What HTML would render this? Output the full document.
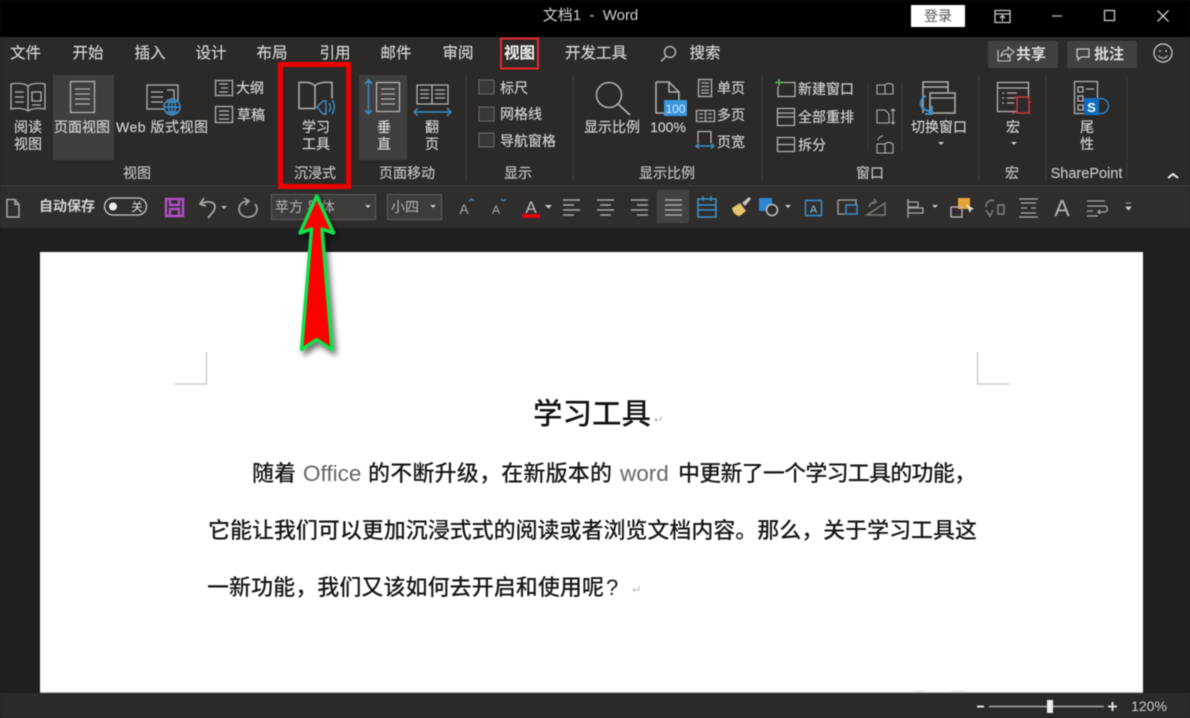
<!DOCTYPE html>
<html lang="zh"><head><meta charset="utf-8"><title>文档1 - Word</title>
<style>
html,body{margin:0;padding:0;background:#1f1f1f;width:1190px;height:718px;overflow:hidden}
svg{display:block;filter:blur(.45px)}
text{font-family:"Liberation Sans","Noto Sans CJK SC",sans-serif}
.tab{font-size:15.5px;fill:#d6d6d6;text-anchor:middle;stroke:#d6d6d6;stroke-width:.15}
.r{font-size:14px;fill:#d4d4d4;text-anchor:middle;stroke:#d4d4d4;stroke-width:.15}
.l{font-size:14px;fill:#d4d4d4;stroke:#d4d4d4;stroke-width:.15}
.g{font-size:14px;fill:#c4c4c4;text-anchor:middle;stroke:#c4c4c4;stroke-width:.15}
.d{font-size:22px;fill:#151515;font-weight:500}
.dl{font-size:22.5px;fill:#666}
.i{fill:none;stroke:#b4b0ac;stroke-width:1.3}
.b{fill:none;stroke:#3d8fc9;stroke-width:1.4}
.t{fill:none;stroke:#aaa6a2;stroke-width:1.5}
</style></head><body>
<svg width="1190" height="718" viewBox="0 0 1190 718" xmlns="http://www.w3.org/2000/svg">
<defs><filter id="sh" x="-40%" y="-10%" width="200%" height="125%"><feDropShadow dx="3" dy="4" stdDeviation="3" flood-color="#000" flood-opacity=".55"/></filter></defs>
<rect width="1190" height="718" fill="#1f1f1f"/>
<rect width="1190" height="37" fill="#000"/>
<rect y="37" width="1190" height="149" fill="#2b2a29"/>
<rect y="186" width="1190" height="42" fill="#2f2e2d"/>
<rect y="185" width="1190" height="1" fill="#3a3a3a"/>

<!-- title bar -->
<text x="590.500" y="20" font-size="15" fill="#d0d0d0" text-anchor="middle">文档1 &#160;-&#160; Word</text>
<rect x="911" y="5" width="54" height="22" fill="#fff"/>
<text x="938" y="21" font-size="14" fill="#555" text-anchor="middle">登录</text>
<path d="M995 10.500h15v12h-15zM995 14h15M1002.500 21v-5M1000 18l2.500-2.500 2.500 2.500" fill="none" stroke="#c8c8c8" stroke-width="1.300"/>
<path d="M1052 16h10" stroke="#b5b5b5" stroke-width="1.300"/>
<rect x="1104.500" y="10.500" width="10" height="10" fill="none" stroke="#c8c8c8" stroke-width="1.300"/>
<path d="M1157.500 10.500l11 11M1168.500 10.500l-11 11" stroke="#c8c8c8" stroke-width="1.300"/>

<!-- tabs -->
<text class="tab" x="25.500" y="58">文件</text><text class="tab" x="88" y="58">开始</text><text class="tab" x="150" y="58">插入</text><text class="tab" x="211" y="58">设计</text><text class="tab" x="272" y="58">布局</text><text class="tab" x="335" y="58">引用</text><text class="tab" x="396" y="58">邮件</text><text class="tab" x="458" y="58">审阅</text>
<text class="tab" x="519.500" y="58" style="fill:#eee;font-weight:700">视图</text>
<rect x="501" y="38.500" width="37" height="30" fill="none" stroke="#e8272e" stroke-width="2"/>
<text class="tab" x="596" y="58">开发工具</text>
<circle cx="670" cy="52" r="5.500" class="i" style="stroke-width:1.500"/><path d="M666 56.500l-5 5" class="i" style="stroke-width:1.500"/>
<text class="tab" x="705" y="58">搜索</text>

<rect x="988" y="41" width="70" height="27" rx="2" fill="#414140"/>
<path d="M998 50v11h12v-5M1001 56c1-5 4-6 7-6v-3l6 5-6 5v-3c-3 0-5 0-7 2z" fill="none" stroke="#ccc" stroke-width="1.100"/>
<text x="1031" y="59" font-size="15" fill="#ddd" font-weight="700" text-anchor="middle">共享</text>
<rect x="1067" y="41" width="70" height="27" rx="2" fill="#414140"/>
<path d="M1077 49h12v8h-8l-3 3v-3h-1z" fill="none" stroke="#ccc" stroke-width="1.200"/>
<text x="1109" y="59" font-size="15" fill="#ddd" font-weight="700" text-anchor="middle">批注</text>
<circle cx="1163" cy="53" r="9" fill="none" stroke="#bbb" stroke-width="1.400"/><circle cx="1160" cy="51" r="1" fill="#bbb"/><circle cx="1166" cy="51" r="1" fill="#bbb"/><path d="M1158.500 55.500c2 3.500 7 3.500 9 0" fill="none" stroke="#bbb" stroke-width="1.200"/>

<!-- group 视图 -->
<rect x="53" y="75" width="61" height="85" fill="#403f3e"/>
<path class="i" d="M28 86c-4-3-12-3-17-2v25c5-1 13-1 17 2c4-3 12-3 17-2v-25c-5-1-13-1-17 2zM28 86v25M15 92h9M15 97h9M15 102h9M32 92h9v9h-9zM32 105h9"/>
<rect class="i" x="70.500" y="81.500" width="24" height="31"/><path class="i" d="M75 89h15M75 94h15M75 99h15M75 104h15"/>
<text class="r" x="28" y="132">阅读</text><text class="r" x="28" y="149">视图</text>
<text class="r" x="82" y="132">页面视图</text>
<rect class="i" x="147" y="85" width="31" height="24"/><path class="i" d="M151 92h12M151 97h12M151 102h12M167 90h7v14"/>
<circle cx="172" cy="107" r="8" fill="#2b2a29" stroke="#3d8fc9" stroke-width="1.500"/><path class="b" d="M164 107h16M172 99v16M167 102h10M167 112h10"/><ellipse cx="172" cy="107" rx="3.500" ry="8" class="b"/>
<text class="l" x="116" y="132" textLength="92">Web 版式视图</text>
<rect class="i" x="215.500" y="80.500" width="17" height="15"/><path class="i" d="M219 84h9M221 88h7M219 92h9"/>
<text class="l" x="236" y="93">大纲</text>
<rect class="i" x="215.500" y="106.500" width="17" height="16"/><path class="i" d="M219 111h10M219 115h10M219 119h10"/>
<text class="l" x="237" y="120">草稿</text>
<text class="g" x="137" y="178">视图</text>
<path d="M279.500 75v105M466 75v105M573 76v104M762 76v104M979 76v104M1046 76v104M1127 76v104" stroke="#3c3b3a"/>

<!-- 学习工具 -->
<path class="i" d="M315 86c-3-4-11-4-16-3.500v26h16M315 86c3-4 11-4 17-3.500v16M315 86v23" style="stroke-width:1.500"/>
<path class="b" d="M317 107l6-6h3v13h-3zM329 103c2 3 2 6 0 9M332 100c3 4 3 10 0 14" />
<text class="r" x="316" y="132">学习</text><text class="r" x="316" y="149">工具</text>
<text class="g" x="315" y="178">沉浸式</text>
<rect x="280.500" y="64.500" width="68" height="122" fill="none" stroke="#ee0000" stroke-width="5"/>

<!-- 页面移动 -->
<rect x="359" y="75" width="48" height="85" fill="#403f3e"/>
<path class="b" d="M368.500 80v34M365 84l3.500-4 3.500 4M365 110l3.500 4 3.500-4"/>
<rect class="i" x="376.500" y="82.500" width="23" height="29"/><path class="i" d="M381 89h14M381 94h14M381 99h14M381 104h14"/>
<text class="r" x="384" y="132">垂</text><text class="r" x="384" y="149" >直</text>
<path class="i" d="M417 85h15v19h-15zM432 85h16v19h-16zM420 90h9M420 94h9M420 98h9M435 90h10M435 94h10M435 98h10"/>
<path class="b" d="M414 112h37M418 108l-4 4 4 4M447 108l4 4-4 4"/>
<text class="r" x="432" y="132">翻</text><text class="r" x="432" y="149">页</text>
<text class="g" x="407" y="178">页面移动</text>

<!-- 显示 -->
<rect x="479" y="80" width="15" height="14" fill="#383837" stroke="#6d6c6b"/>
<text class="l" x="500" y="93">标尺</text>
<rect x="479" y="107" width="15" height="14" fill="#383837" stroke="#6d6c6b"/>
<text class="l" x="500" y="119">网格线</text>
<rect x="479" y="133" width="15" height="14" fill="#383837" stroke="#6d6c6b"/>
<text class="l" x="500" y="146">导航窗格</text>
<text class="g" x="518" y="178">显示</text>

<!-- 显示比例 -->
<circle cx="609" cy="95" r="12.500" class="i" style="stroke-width:1.500"/><path class="i" d="M618 104l12 11" style="stroke-width:1.800"/>
<text class="r" x="612" y="132">显示比例</text>
<path class="i" d="M656 82h13l10 10v8M669 82v10h10M656 82v31h8" style="stroke-width:1.500"/>
<rect x="664" y="100" width="23" height="16" fill="#3a97dd"/><text x="675.500" y="113" font-size="12" fill="#cfe6f7" text-anchor="middle">100</text>
<text class="r" x="668" y="132">100%</text>
<rect class="i" x="698.500" y="79.500" width="13" height="17"/><path class="i" d="M701 83h8M701 86.500h8M701 90h8M701 93h8"/>
<text class="l" x="717" y="93">单页</text>
<path class="i" d="M696.500 110.500h18v11h-18zM705.500 110.500v11M699 114h4M699 118h4M708 114h4M708 118h4"/>
<text class="l" x="717" y="120">多页</text>
<path class="i" d="M698 143v-11.500h13v11.500"/><path class="b" d="M696 146h18M699 143.500l-3 2.500 3 2.500M711 143.500l3 2.500-3 2.500"/>
<text class="l" x="717" y="147">页宽</text>
<text class="g" x="667" y="178">显示比例</text>

<!-- 窗口 -->
<path class="i" d="M781 82.500h14v14h-17v-10"/><path d="M779 79v7M775.500 82.500h7" stroke="#5cb85c" stroke-width="1.500"/>
<text class="l" x="798" y="94">新建窗口</text>
<path class="i" d="M777.500 108.500h17v17h-17zM777.500 117h17M777.500 113h17"/>
<text class="l" x="798" y="122">全部重排</text>
<path class="i" d="M777.500 137.500h17v14h-17zM777.500 144.500h17"/>
<text class="l" x="798" y="150">拆分</text>
<path class="i" d="M877 85h8v9h-8zM885 85c2-2 5-2 8 0v9h-8" style="stroke-width:1.100"/>
<path class="i" d="M877 110h8l4 4v9h-12zM893 110v13M891 111l2-2 2 2M891 122l2 2 2-2" style="stroke-width:1.100"/>
<path class="i" d="M877 144h8v9h-8zM885 144c2-2 5-2 8 0v9h-8M878 140c1-3 3-4 5-4" style="stroke-width:1.100"/>
<path d="M868 84v66M902 84v66" stroke="#3c3b3a"/>
<path class="i" d="M923 113v-31h25v10M923 87h25" style="stroke-width:1.500"/>
<rect x="930" y="93" width="25" height="20" fill="#2b2a29" stroke="#b4b0ac" stroke-width="1.500"/><path class="i" d="M930 98h25"/>
<path d="M926 96c-7 3-7 12 0 14l6 3M932 106v8h-7" fill="none" stroke="#3d8fc9" stroke-width="2"/>
<text class="r" x="939" y="132">切换窗口</text>
<path d="M938 142h6l-3 3z" fill="#ccc"/>
<text class="g" x="870" y="178">窗口</text>

<!-- 宏 -->
<rect class="i" x="997.500" y="82.500" width="31" height="29"/><path class="i" d="M998 88h30M1002 93h2M1007 93h10M1002 98h2M1007 98h8M1002 103h2M1007 103h7"/>
<path d="M1015 97h14v16h-12v-16M1029 97v5h2M1015 113h-3" fill="#2b2a29" stroke="#c8383f" stroke-width="1.500"/>
<text class="r" x="1013" y="132">宏</text><path d="M1011 142h6l-3 3z" fill="#ccc"/>
<text class="g" x="1012" y="178">宏</text>

<!-- SharePoint -->
<rect class="i" x="1074.500" y="81.500" width="23" height="32"/>
<path class="i" d="M1078 87h5v5h-5zM1078 96h5v5h-5zM1078 105h5v5h-5zM1086 89h8"/>
<circle cx="1101" cy="106" r="7.500" fill="#2b2a29" stroke="#2f7fc0" stroke-width="1.500"/>
<rect x="1084" y="98" width="15" height="17" fill="#0f6cc0"/><text x="1091.500" y="112" font-size="13" font-weight="700" fill="#fff" text-anchor="middle">S</text>
<text class="r" x="1087" y="132">尾</text><text class="r" x="1087" y="149">性</text>
<text class="g" x="1086.500" y="178" style="font-size:14.500px">SharePoint</text>
<path d="M1168 178l5-4 5 4" fill="none" stroke="#eee" stroke-width="2"/>

<!-- quick access toolbar -->
<path class="t" d="M7 199.500h8l4 5v12.500h-12zM15 199.500v5h4"/>
<text x="39" y="211" font-size="14" fill="#d4d4d4" font-weight="700">自动保存</text>
<rect x="104.500" y="198" width="42" height="17" rx="8.500" fill="none" stroke="#c4c4c4" stroke-width="1.300"/>
<circle cx="113" cy="206.500" r="4" fill="#eee"/><text x="137" y="211" font-size="12" fill="#ddd" text-anchor="middle">关</text>
<path d="M166 199h17v17h-17zM170 199v6h9v-6M170 216v-7h9v7" fill="none" stroke="#b14fc5" stroke-width="2.400"/>
<path d="M204 198l-4 6 6 2M200 204c8-4 15-2 15 3c0 4-4 7-7 11" fill="none" stroke="#a9a5a1" stroke-width="1.800"/>
<path d="M221 206h6l-3 3z" fill="#bbb"/>
<path d="M244 198l5 3-4 4M249 201c-7 0-10 4-10 8c0 5 4 8 9 8c6 0 9-4 9-8c0-2-1-4-2-5" fill="none" stroke="#a9a5a1" stroke-width="1.600"/>

<rect x="271.500" y="194.500" width="104" height="25" fill="#3d3c3b" stroke="#5c5b5a"/>
<text x="275" y="212" font-size="14" fill="#b5b5b5">苹方 黑体</text>
<path d="M365 205h6l-3 3z" fill="#ccc"/>
<rect x="387.500" y="194.500" width="54" height="25" fill="#3d3c3b" stroke="#5c5b5a"/>
<text x="391" y="212" font-size="14" fill="#b5b5b5">小四</text>
<path d="M430 205h6l-3 3z" fill="#ccc"/>

<text x="464" y="214" font-size="14" fill="#a8a8a8" text-anchor="middle">A</text><path d="M469 201l2.500-2 2.500 2" fill="none" stroke="#3d8fc9" stroke-width="1.200"/>
<text x="496" y="214" font-size="12" fill="#a8a8a8" text-anchor="middle">A</text><path d="M501 199l2.500 2 2.500-2" fill="none" stroke="#3d8fc9" stroke-width="1.200"/>
<text x="531" y="213" font-size="17" fill="#bbb" text-anchor="middle">A</text><rect x="522" y="214" width="18" height="4" fill="#e10012"/>
<path d="M545 205h7l-3.500 3.500z" fill="#ccc"/>
<path class="t" d="M563 200h17M563 205h11M563 210h17M563 215h11"/>
<path class="t" d="M597 200h17M600 205h11M597 210h17M600 215h11"/>
<path class="t" d="M631 200h17M637 205h11M631 210h17M637 215h11"/>
<rect x="657" y="190" width="32" height="33" fill="#434241"/>
<path class="t" d="M665 200h17M665 205h17M665 210h17M665 215h17"/>
<path d="M698 199h18v18h-18zM698 205h18M698 210h18M703 196v5M711 196v5" fill="none" stroke="#3d8fc9" stroke-width="1.600"/>
<path d="M732 208l8-5 6 8-6 5c-4 0-7-3-8-8z" fill="#e3c56b"/><path d="M742 203l7-6 2 2-6 7z" fill="#c8c4bf"/>
<rect x="759" y="198" width="13" height="13" fill="#2e86d1"/><circle cx="772" cy="210" r="5.500" fill="#2f2e2d" stroke="#bbb" stroke-width="1.600"/>
<path d="M785 205h6l-3 3z" fill="#ccc"/>
<rect x="805.500" y="200.500" width="16" height="15" fill="none" stroke="#3d8fc9" stroke-width="1.500"/><text x="813.500" y="213" font-size="11" fill="#8cc3ea" text-anchor="middle">A</text>
<path class="t" d="M838 200h18v5M838 200v14h7" style="stroke-width:1.300"/><rect x="846" y="205" width="11" height="9" fill="none" stroke="#3d8fc9" stroke-width="1.500"/>
<path d="M867 215l18-12v12zM869 207c1-4 4-5 7-5M874 199l2 3-3 2" fill="none" stroke="#7a7875" stroke-width="1.500"/>
<path class="t" d="M908 199v19M908 202h10v5h-10M908 208h15v5h-15" style="stroke-width:1.300"/><path d="M932 205h6l-3 3z" fill="#ccc"/>
<rect x="958" y="198" width="12" height="11" fill="#e7a334"/><rect x="951" y="207" width="11" height="10" fill="none" stroke="#bbb" stroke-width="1.300"/>
<path d="M966 204l4 9 1-3 3-1z" fill="#ddd"/>
<path d="M986 207c0-5 4-8 8-6M986 210l4 6 3-6M998 205h6v9h-6z" fill="none" stroke="#777" stroke-width="1.700"/>
<path class="t" d="M1019 199h19M1019 217h19M1021 203h15M1021 213h15M1021 208h6M1031 208h5" style="stroke-width:1.300"/>
<text x="1062" y="216" font-size="23" fill="#b5b2af" text-anchor="middle">A</text>
<path class="t" d="M1087 201h18M1087 206h18c3 0 3 6 0 6h-7M1087 211h6M1087 216h11M1100 210l-2 2 2 2" style="stroke-width:1.300"/>
<path d="M1126 203h5M1126 207h5l-2.500 3z" fill="#ccc" stroke="#ccc" stroke-width=".8"/>

<!-- page -->
<rect x="40" y="252" width="1103" height="441" fill="#fff"/>
<path d="M174 384h32.500v-32M1010 384h-32.500v-32" fill="none" stroke="#c4c4c4" stroke-width="1.200"/>
<text x="533" y="424" font-size="29.500" fill="#111" font-weight="500">学习工具</text>
<path d="M661 416v4h-6M657 418l-2 2 2 2" fill="none" stroke="#aaa" stroke-width=".8"/>

<text class="d" x="252" y="481">随着</text>
<text class="dl" x="303" y="481">Office</text>
<text class="d" x="368" y="481" textLength="244">的不断升级，在新版本的</text>
<text class="dl" x="620" y="481">word</text>
<text class="d" x="678" y="481" textLength="298">中更新了一个学习工具的功能，</text>
<text class="d" x="208" y="538" textLength="769">它能让我们可以更加沉浸式式的阅读或者浏览文档内容。那么，关于学习工具这</text>
<text class="d" x="207" y="595" textLength="397">一新功能，我们又该如何去开启和使用呢</text>
<text x="606" y="595" font-size="22" fill="#151515">?</text>
<path d="M639 586v4h-6M635 588l-2 2 2 2" fill="none" stroke="#aaa" stroke-width=".8"/>
<path d="M913 691h12M950 691h16" stroke="#efefef" stroke-width="1.500"/>

<!-- arrow -->
<path d="M316.700 196l16.800 37-11.500-4 10 120.500-15.300-10-15.200 10 10-120.500-11.500 4z" fill="#f00" stroke="#0ee04b" stroke-width="3.400" stroke-linejoin="round" filter="url(#sh)"/>

<!-- status bar -->
<rect y="693" width="1190" height="25" fill="#2b2a29"/>
<rect x="40" y="692" width="1103" height="1" fill="#bbb"/>
<path d="M977 706.500h7M1108 706.500h9M1112.500 702v9" stroke="#ddd" stroke-width="2"/>
<path d="M989 706.500h115" stroke="#aaa" stroke-width="1.500"/>
<rect x="1047" y="700" width="6" height="13" fill="#eee"/>
<text x="1149" y="711" font-size="14" fill="#ccc" text-anchor="middle">120%</text>
</svg>
</body></html>
